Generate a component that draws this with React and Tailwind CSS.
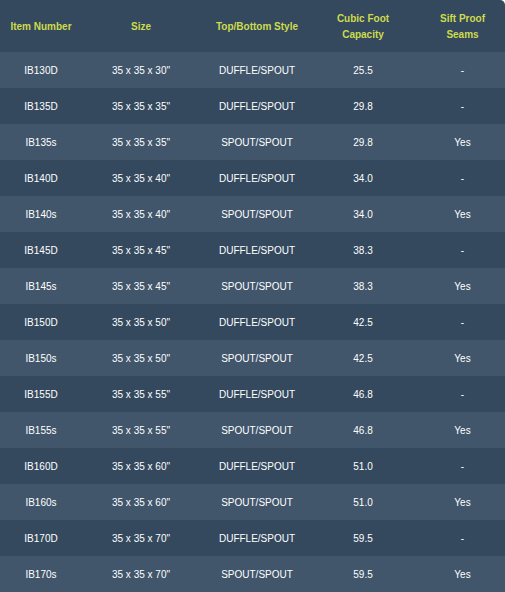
import React from 'react';

const rows = [
  ['IB130D', '35 x 35 x 30"', 'DUFFLE/SPOUT', '25.5', '-'],
  ['IB135D', '35 x 35 x 35"', 'DUFFLE/SPOUT', '29.8', '-'],
  ['IB135s', '35 x 35 x 35"', 'SPOUT/SPOUT', '29.8', 'Yes'],
  ['IB140D', '35 x 35 x 40"', 'DUFFLE/SPOUT', '34.0', '-'],
  ['IB140s', '35 x 35 x 40"', 'SPOUT/SPOUT', '34.0', 'Yes'],
  ['IB145D', '35 x 35 x 45"', 'DUFFLE/SPOUT', '38.3', '-'],
  ['IB145s', '35 x 35 x 45"', 'SPOUT/SPOUT', '38.3', 'Yes'],
  ['IB150D', '35 x 35 x 50"', 'DUFFLE/SPOUT', '42.5', '-'],
  ['IB150s', '35 x 35 x 50"', 'SPOUT/SPOUT', '42.5', 'Yes'],
  ['IB155D', '35 x 35 x 55"', 'DUFFLE/SPOUT', '46.8', '-'],
  ['IB155s', '35 x 35 x 55"', 'SPOUT/SPOUT', '46.8', 'Yes'],
  ['IB160D', '35 x 35 x 60"', 'DUFFLE/SPOUT', '51.0', '-'],
  ['IB160s', '35 x 35 x 60"', 'SPOUT/SPOUT', '51.0', 'Yes'],
  ['IB170D', '35 x 35 x 70"', 'DUFFLE/SPOUT', '59.5', '-'],
  ['IB170s', '35 x 35 x 70"', 'SPOUT/SPOUT', '59.5', 'Yes'],
];

const App = () => {
  return (
    <div className="w-[505px] h-[592px] overflow-hidden bg-white font-['Liberation_Sans',Arial,sans-serif]">
      <table className="w-[505px] table-fixed border-collapse rounded-tr-[5px] overflow-hidden text-[10px]">
        <colgroup>
          <col className="w-[82px]" />
          <col className="w-[118px]" />
          <col className="w-[114px]" />
          <col className="w-[98px]" />
          <col className="w-[93px]" />
        </colgroup>
        <thead>
          <tr className="h-[52px] bg-[#34495e] text-[#cddb4c] leading-[16px]">
            <th className="font-bold pt-[2px]">Item Number</th>
            <th className="font-bold pt-[2px]">Size</th>
            <th className="font-bold pt-[2px]">Top/Bottom Style</th>
            <th className="font-bold pt-[2px]">Cubic Foot<br />Capacity</th>
            <th className="font-bold pt-[2px] pl-[8px]">Sift Proof<br />Seams</th>
          </tr>
        </thead>
        <tbody className="text-white">
          {rows.map((r, i) => (
            <tr key={r[0]} className={`h-[36px] ${i % 2 === 0 ? 'bg-[#41556b]' : 'bg-[#34495e]'}`}>
              <td className="text-center">{r[0]}</td>
              <td className="text-center">{r[1]}</td>
              <td className="text-center">{r[2]}</td>
              <td className="text-center">{r[3]}</td>
              <td className="text-center pl-[8px]">{r[4]}</td>
            </tr>
          ))}
        </tbody>
      </table>
    </div>
  );
};

export default App;
